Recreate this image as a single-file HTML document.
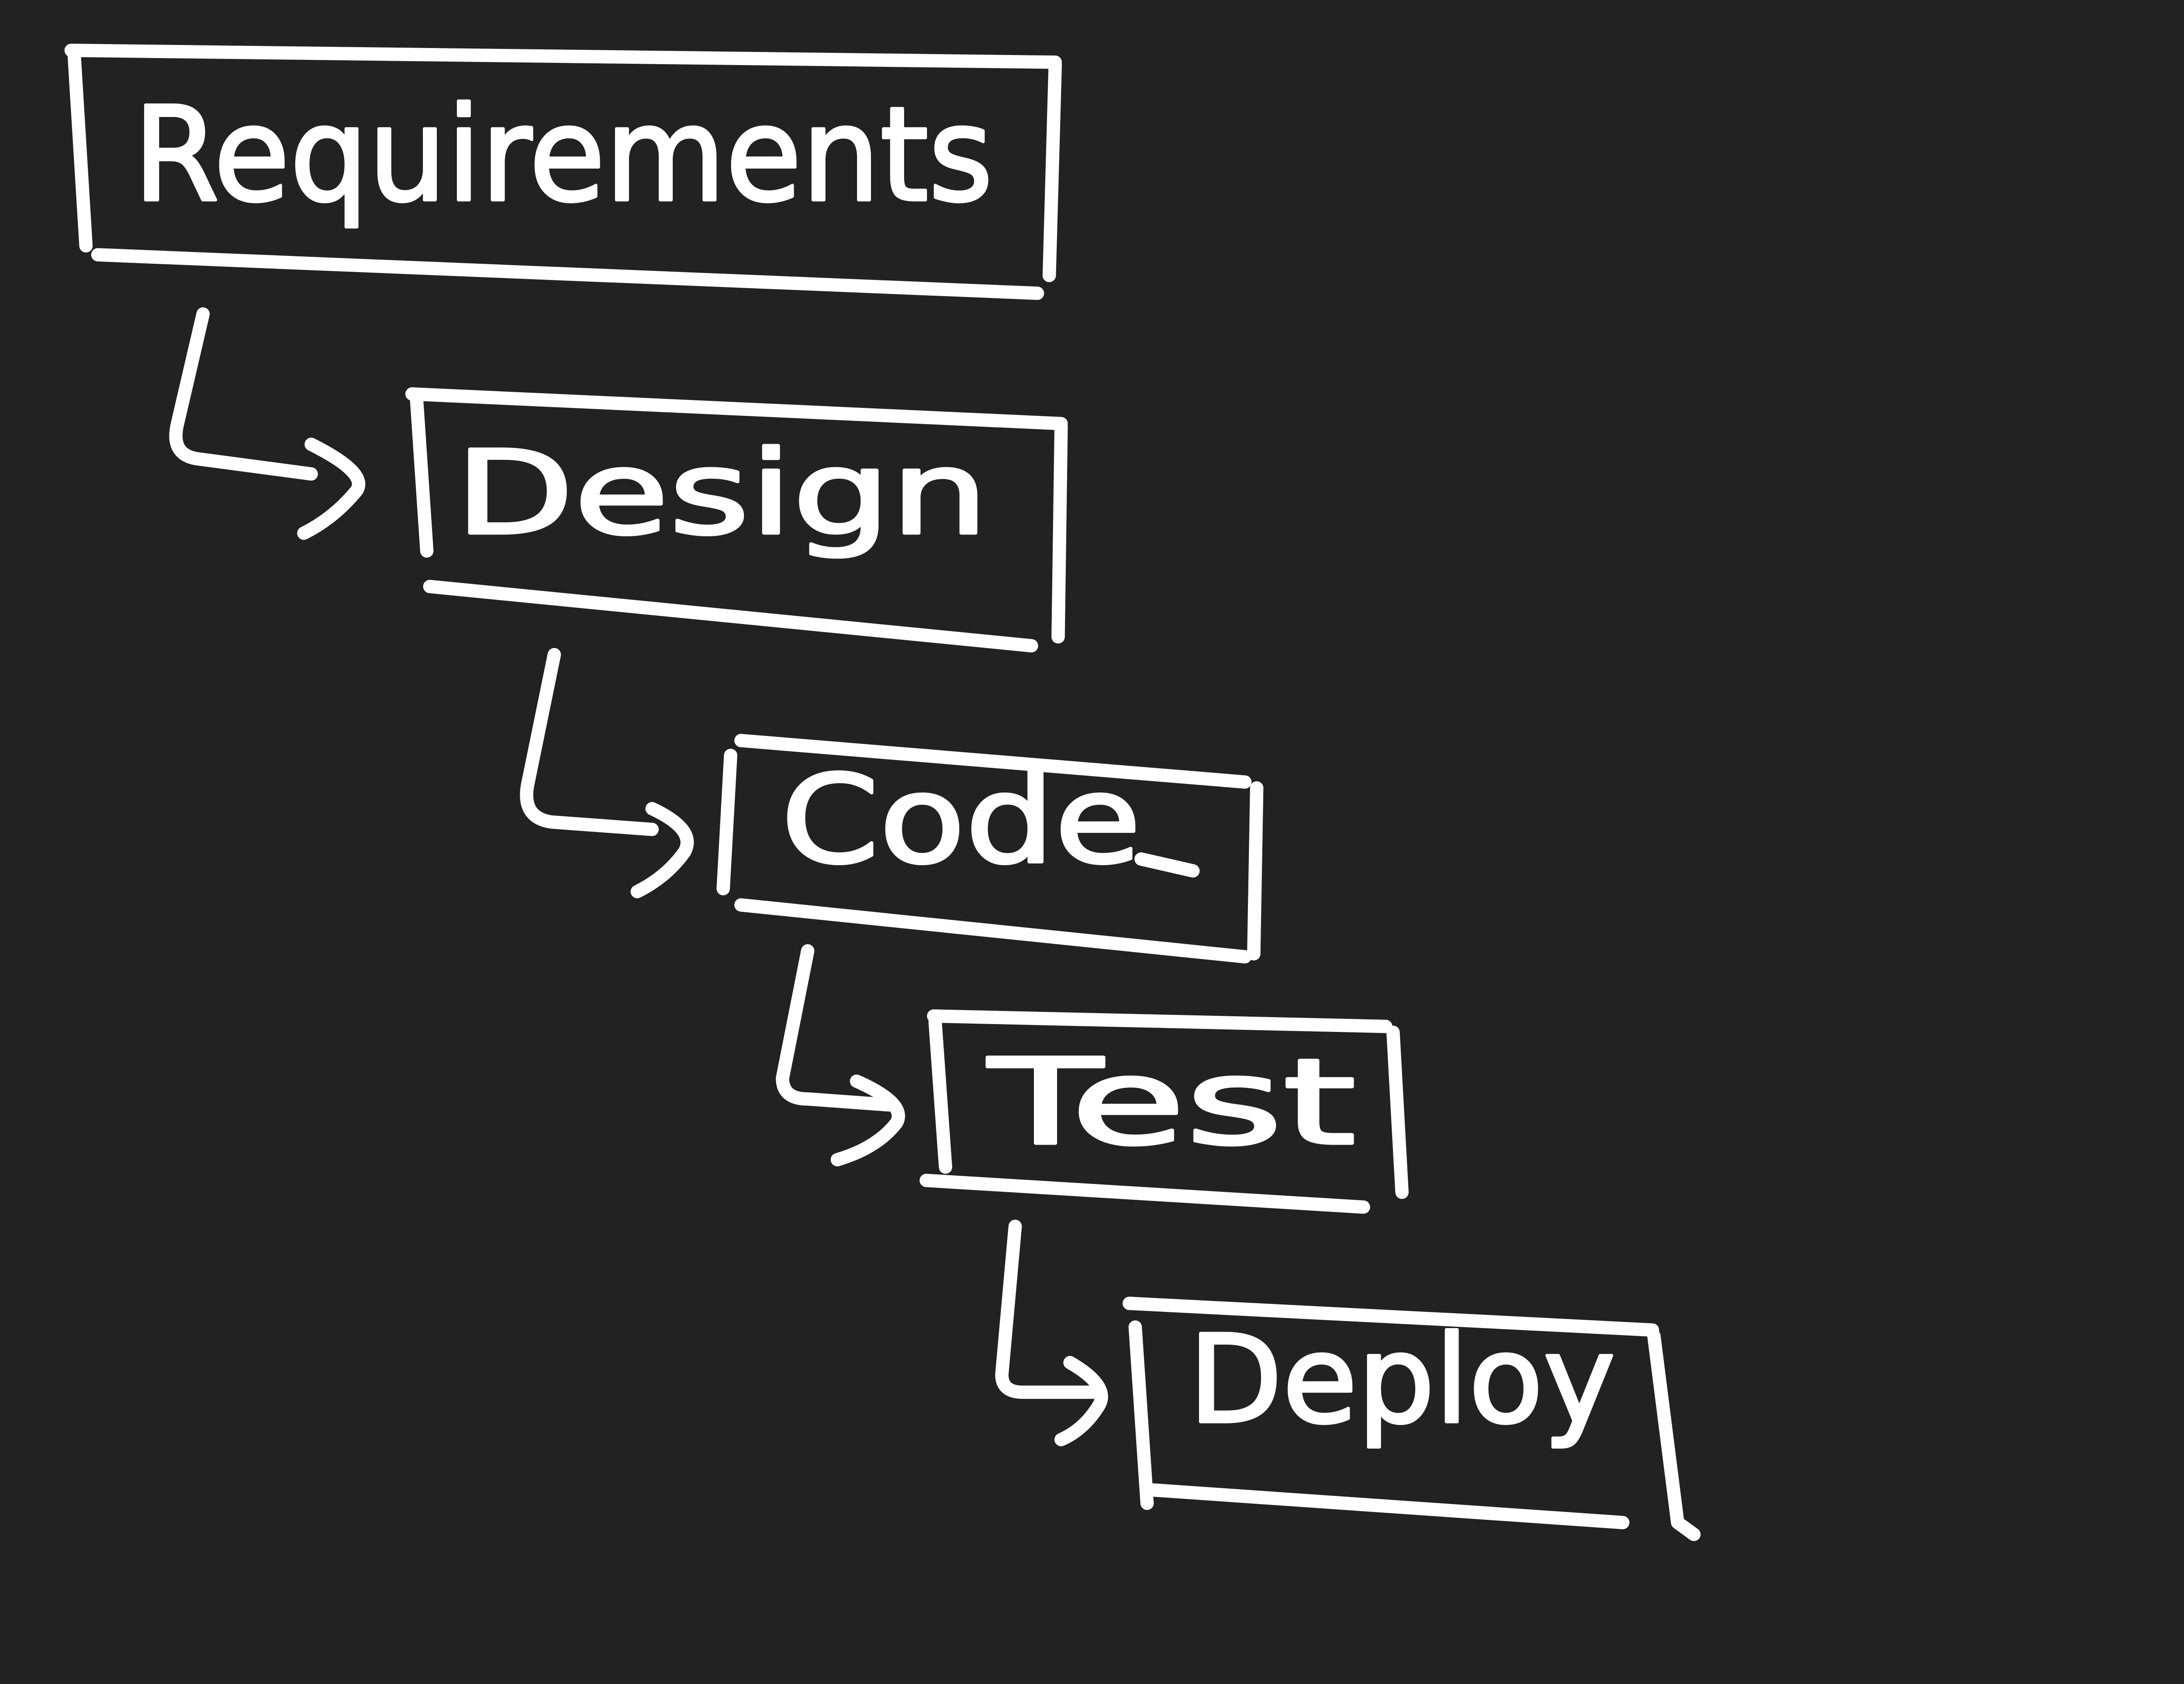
<!DOCTYPE html>
<html><head><meta charset="utf-8"><style>
html,body{margin:0;padding:0;background:#222222;width:5320px;height:3856px;overflow:hidden;}
svg{display:block;position:absolute;left:0;top:0;width:5320px;height:3856px;}
text{font-family:"DejaVu Sans","Liberation Sans",sans-serif;fill:#fff;stroke:#fff;stroke-width:2;stroke-linejoin:round;}
</style></head><body>
<svg width="5320" height="3856" viewBox="0 0 1568 1137" preserveAspectRatio="none" xmlns="http://www.w3.org/2000/svg">
<rect width="1568" height="1137" fill="#222222"/>
<g fill="none" stroke="#fff" stroke-width="9" stroke-linecap="round" stroke-linejoin="round">
<path d="M48 34 L712 42"/>
<path d="M50 36 L58 166"/>
<path d="M66 172 L700 198"/>
<path d="M712 44 L708 186"/>
<path d="M137 212 L120 285 Q114 308 135 310 L210 320"/>
<path d="M210 300 Q250 320 240 332 Q225 350 205 360"/>
<path d="M278 266 L716 286"/>
<path d="M281 268 L288 372"/>
<path d="M290 396 L696 436"/>
<path d="M716 288 L714 430"/>
<path d="M374 442 L356 530 Q352 552 372 555 L440 560"/>
<path d="M440 546 Q470 560 462 575 Q450 592 430 602"/>
<path d="M500 500 L840 528"/>
<path d="M493 510 L488 600"/>
<path d="M500 611 L840 646"/>
<path d="M848 532 L846 644"/>
<path d="M770 580 L805 588"/>
<path d="M545 642 L528 728 Q528 742 545 742 L600 746"/>
<path d="M578 730 Q612 745 605 758 Q592 775 565 783"/>
<path d="M630 686 L935 693"/>
<path d="M631 690 L638 788"/>
<path d="M625 797 L920 815"/>
<path d="M940 697 L946 805"/>
<path d="M685 828 L676 928 Q676 940 690 940 L738 940"/>
<path d="M722 920 Q748 935 742 948 Q732 965 716 972"/>
<path d="M762 880 L1115 898"/>
<path d="M766 896 L774 1015"/>
<path d="M778 1006 L1095 1028"/>
<path d="M1116 902 L1132 1028 L1143 1036"/>
</g>
<text x="90" y="135" font-size="88" textLength="580" lengthAdjust="spacingAndGlyphs">Requirements</text>
<text x="307" y="360" font-size="78" textLength="360" lengthAdjust="spacingAndGlyphs">Design</text>
<text x="527" y="582" font-size="82" textLength="243" lengthAdjust="spacingAndGlyphs">Code</text>
<text x="667" y="772" font-size="80" textLength="248" lengthAdjust="spacingAndGlyphs">Test</text>
<text x="802" y="960" font-size="82" textLength="288" lengthAdjust="spacingAndGlyphs">Deploy</text>
</svg>
</body></html>
